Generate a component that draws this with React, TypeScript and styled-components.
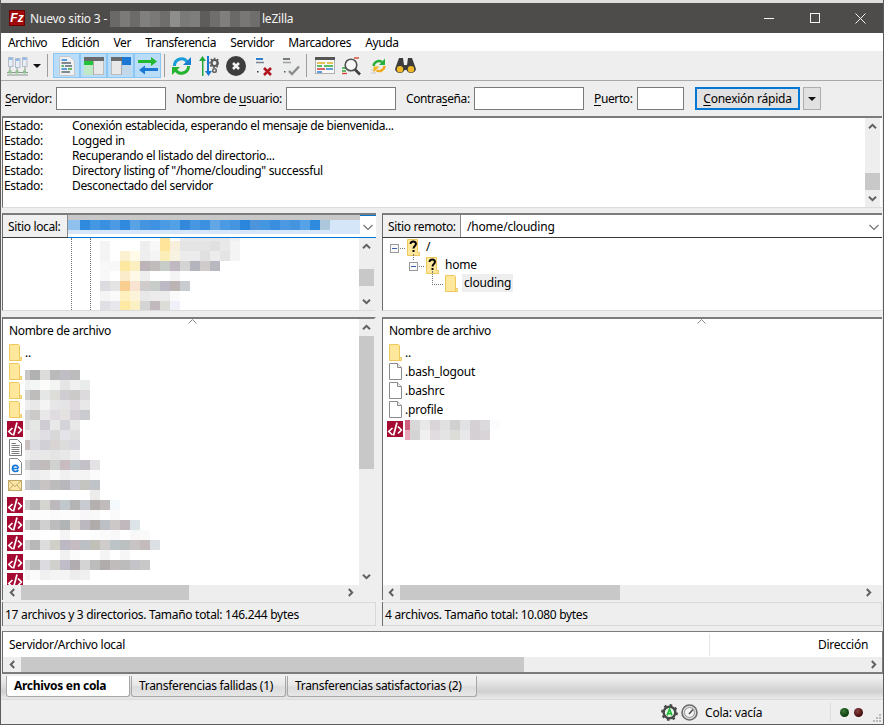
import React from "react";
import styled, {createGlobalStyle} from "styled-components";

const GlobalStyle = createGlobalStyle`
  html, body { margin: 0; padding: 0; background: #fff; }
  body { font-family: "Noto Sans", "Liberation Sans", sans-serif; font-size: 12px; color: #000; }
  * { box-sizing: border-box; }
  u { text-underline-offset: 2px; }
`;

const Window = styled.div`
  width: 884px;
  height: 725px;
  display: flex;
  flex-direction: column;
  overflow: hidden;
  background: #eeeeee;
  border-left: 1px solid #5c5c5c;
  border-right: 1px solid #5c5c5c;
  border-bottom: 1px solid #5c5c5c;
`;
const TopEdge = styled.div`
  height: 3px;
  margin: 0 -1px;
  background: #dfdfdf;
  flex: none;
`;
const TitleBar = styled.div`
  height: 30px;
  flex: none;
  margin: 0 -1px;
  background: #4d4c4a;
  color: #f4f4f4;
  display: flex;
  align-items: center;
  padding-left: 9px;
  padding-right: 1px;
`;
const AppLogo = styled.div`
  width: 16px;
  height: 16px;
  background: #a30a0a;
  border: 1px solid #6d0000;
  color: #fff;
  font: italic bold 12px/14px "Liberation Sans", sans-serif;
  text-align: center;
  margin-right: 5px;
`;
const TitleText = styled.span`
  font-size: 12px;
  white-space: pre;
  letter-spacing: -0.2px;
`;
const Spacer = styled.div`
  flex: 1;
`;
const WinButton = styled.div`
  width: 45.5px;
  height: 30px;
  display: flex;
  align-items: center;
  justify-content: center;
`;
const Tile = styled.i.attrs<{$c: string}>((p) => ({style: {background: `#${p.$c}`}}))<{$c: string}>`
  display: block;
  flex: none;
  width: 10px;
  height: 100%;
`;
const MosaicRow = styled.div<{$h: number}>`
  display: flex;
  height: ${(p) => p.$h}px;
  ${Tile}:first-child { width: 5px; }
`;
const Mosaic = ({rows, h = 10, className}: {rows: string[]; h?: number; className?: string}) => (
  <div className={className}>
    {rows.map((r, i) => (
      <MosaicRow key={i} $h={h}>
        {r.split(" ").map((c, j) => (
          <Tile key={j} $c={c} />
        ))}
      </MosaicRow>
    ))}
  </div>
);
const TitleBlur = styled(Mosaic)`
  width: 152px;
  margin-top: 1px;
  ${Tile}:first-child { width: 10px; }
`;

const MenuBar = styled.div`
  height: 18px;
  flex: none;
  background: #fff;
  display: flex;
  align-items: center;
  padding-left: 7px;
  gap: 14.2px;
`;
const MenuItem = styled.span`
  font-size: 12px;
  letter-spacing: -0.4px;
`;

const Toolbar = styled.div`
  height: 30px;
  flex: none;
  display: flex;
  align-items: center;
  padding: 0 0 0 5px;
  margin-right: 1px;
  border-bottom: 1px solid #a9a9a9;
`;
const ToolButton = styled.div<{$w?: number}>`
  width: ${(p) => p.$w ?? 27}px;
  height: 25px;
  display: flex;
  align-items: center;
  justify-content: center;
`;
const ToggleGroup = styled.div`
  display: flex;
  height: 25px;
`;
const ToggleButton = styled(ToolButton)`
  background: #b9dcf8;
  border: 1px solid #8cc6f2;
`;
const ToolSep = styled.div<{$after: number}>`
  width: 1px;
  height: 23px;
  background: #9c9c9c;
  margin: 0 ${(p) => p.$after}px 0 3px;
`;
const Caret = styled.div`
  width: 0;
  height: 0;
  border-left: 4px solid transparent;
  border-right: 4px solid transparent;
  border-top: 4px solid #111;
`;

const QuickBar = styled.div`
  height: 35px;
  flex: none;
  display: flex;
  align-items: center;
  padding: 0 0 0 4px;
`;
const QuickLabel = styled.label<{$w: number}>`
  width: ${(p) => p.$w}px;
  flex: none;
  font-size: 12px;
  letter-spacing: -0.38px;
  white-space: nowrap;
`;
const QuickInput = styled.div<{$w: number; $after: number}>`
  width: ${(p) => p.$w}px;
  height: 23px;
  background: #fff;
  border: 1px solid #7a7a7a;
  margin-right: ${(p) => p.$after}px;
`;
const ConnectButton = styled.div`
  width: 105px;
  height: 23px;
  border: 2px solid #0078d7;
  background: #e1e1e1;
  display: flex;
  align-items: center;
  justify-content: center;
  font-size: 12px;
  letter-spacing: -0.25px;
`;
const ConnectCaret = styled.div`
  width: 18px;
  height: 23px;
  margin-left: 3px;
  background: #e1e1e1;
  border: 1px solid #adadad;
  display: flex;
  align-items: center;
  justify-content: center;
`;

const LogPanel = styled.div`
  height: 92px;
  flex: none;
  margin: 0 1px;
  padding-right: 2px;
  background: #fff;
  border-top: 2px solid #7c7c7c;
  border-left: 1px solid #6d6d6d;
  border-bottom: 1px solid #dcdcdc;
  display: flex;
`;
const LogLines = styled.div`
  flex: 1;
  padding: 0 0 0 1px;
`;
const LogLine = styled.div`
  display: flex;
  height: 15px;
  line-height: 15px;
  font-size: 12px;
  letter-spacing: -0.35px;
  white-space: pre;
`;
const LogTag = styled.span`
  width: 68px;
  flex: none;
`;

const VBar = styled.div`
  width: 15px;
  flex: 1;
  background: #eeeeee;
  display: flex;
  flex-direction: column;
  align-items: center;
`;
const VColumn = styled.div`
  width: 15px;
  flex: none;
  display: flex;
  flex-direction: column;
`;
const ArrowCell = styled.div`
  width: 15px;
  height: 17px;
  flex: none;
  display: flex;
  align-items: center;
  justify-content: center;
`;
const VTrack = styled.div<{$before: number; $size: number}>`
  flex: 1;
  width: 15px;
  padding-top: ${(p) => p.$before}px;
  &::before {
    content: "";
    display: block;
    height: ${(p) => p.$size}px;
    background: #c8c8c8;
  }
`;
const HBar = styled.div<{$end?: number}>`
  height: 15px;
  flex: none;
  background: #eeeeee;
  display: flex;
  padding-right: ${(p) => p.$end ?? 0}px;
`;
const HTrack = styled.div<{$before: number; $size: number}>`
  flex: 1;
  display: flex;
  padding-left: ${(p) => p.$before}px;
  &::before {
    content: "";
    display: block;
    width: ${(p) => p.$size}px;
    background: #c8c8c8;
  }
`;
const HArrow = styled(ArrowCell)<{$w?: number}>`
  height: 15px;
  width: ${(p) => p.$w ?? 18}px;
`;
const Corner = styled.div`
  width: 15px;
  height: 15px;
  flex: none;
  background: #eeeeee;
`;

const Chevron = ({dir}: {dir: "up" | "down" | "left" | "right"}) => {
  const rot = {up: 0, right: 90, down: 180, left: 270}[dir];
  return (
    <svg width="11" height="11" viewBox="0 0 11 11" style={{transform: `rotate(${rot}deg)`}}>
      <path d="M2 7.2 L5.5 3.8 L9 7.2" fill="none" stroke="#606060" strokeWidth="2" />
    </svg>
  );
};

const VScroll = ({before, size, corner}: {before: number; size: number; corner?: boolean}) => (
  <VColumn>
    <VBar>
      <ArrowCell>
        <Chevron dir="up" />
      </ArrowCell>
      <VTrack $before={before} $size={size} />
      <ArrowCell>
        <Chevron dir="down" />
      </ArrowCell>
    </VBar>
    {corner && <Corner />}
  </VColumn>
);
const HScroll = ({start, size, end}: {start?: number; size: number; end?: number}) => (
  <HBar $end={end}>
    <HArrow $w={start}>
      <Chevron dir="left" />
    </HArrow>
    <HTrack $before={0} $size={size} />
    <HArrow>
      <Chevron dir="right" />
    </HArrow>
  </HBar>
);

const Panes = styled.div`
  flex: none;
  height: 414px;
  margin: 5px 0 0 1px;
  display: flex;
  gap: 6px;
`;
const Pane = styled.div<{$w: number}>`
  width: ${(p) => p.$w}px;
  display: flex;
  flex-direction: column;
`;
const PathBar = styled.div`
  height: 25px;
  flex: none;
  display: flex;
  border-top: 2px solid #7c7c7c;
  border-left: 1px solid #6d6d6d;
  border-bottom: 1px solid #3c3c3c;
`;
const PathLabel = styled.div<{$w: number}>`
  width: ${(p) => p.$w}px;
  flex: none;
  background: #f0f0f0;
  display: flex;
  align-items: center;
  padding-left: 5px;
  font-size: 12px;
  letter-spacing: -0.35px;
  border-right: 1px solid #8a8a8a;
`;
const PathCombo = styled.div<{$focus?: boolean}>`
  flex: 1;
  position: relative;
  background: #fff;
  display: flex;
  align-items: center;
  padding-left: 6px;
  font-size: 12px;
  letter-spacing: -0.2px;
  ${(p) => p.$focus && "box-shadow: inset 0 1px 0 #0078d7, 0 1px 0 #0078d7;"}
`;
const ComboCaret = styled.div`
  position: absolute;
  right: 2px;
  top: 5px;
  width: 12px;
  height: 12px;
`;
const PathBlur = styled.div`
  width: 292px;
  height: 19px;
  margin-left: -6px;
  align-self: flex-start;
  background: #d4e6f8;
  display: flex;
  flex-direction: column;
  position: relative;
`;
const PathBlurTop = styled.div`
  height: 5px;
  width: 292px;
  background: #c8c8c8;
`;
const PathBlurMain = styled(Mosaic)`
  ${Tile}:first-child { width: 12px; }
`;

const TreePanel = styled.div<{$gutter?: boolean}>`
  height: 73px;
  flex: none;
  display: flex;
  position: relative;
  background: #fff;
  border-left: 1px solid #6d6d6d;
  border-bottom: 1px solid #dcdcdc;
  border-right: ${(p) => (p.$gutter ? "2px solid #eeeeee" : "none")};
`;
const TreeBody = styled.div`
  flex: 1;
  position: relative;
  overflow: hidden;
`;
const DottedLine = styled.div<{$x: number}>`
  position: absolute;
  top: 0;
  bottom: 0;
  left: ${(p) => p.$x}px;
  border-left: 1px dotted #777;
`;
const TreeBlur = styled(Mosaic)`
  position: absolute;
  left: 97px;
  top: 3px;
  ${Tile}:first-child { width: 10px; }
`;
const TreeBlurTop = styled(TreeBlur)`
  top: 0;
`;
const TreeRow = styled.div<{$depth: number}>`
  height: 18px;
  display: flex;
  align-items: center;
  padding-left: ${(p) => 7 + p.$depth * 19}px;
`;
const ExpandBox = styled.div`
  width: 9px;
  height: 9px;
  background: #f8f8f8;
  border: 1px solid #9a9a9a;
  display: flex;
  align-items: center;
  justify-content: center;
  margin-top: 2px;
  &::before {
    content: "";
    width: 5px;
    height: 1px;
    background: #3a5ea8;
  }
`;
const HDots = styled.div<{$w: number}>`
  width: ${(p) => p.$w}px;
  border-top: 1px dotted #777;
  margin: 2px 2px 0 1px;
`;
const TreeLabel = styled.span<{$selected?: boolean}>`
  margin-left: 4px;
  padding: 0 2px;
  height: 18px;
  line-height: 18px;
  font-size: 12px;
  letter-spacing: -0.2px;
  background: ${(p) => (p.$selected ? "#eeeeee" : "transparent")};
`;
const LElbow = styled.div`
  width: 11px;
  height: 14px;
  border-left: 1px dotted #777;
  border-bottom: 1px dotted #777;
  margin: -10px 2px 0 4px;
`;
const VDots = styled.div<{$x: number; $y: number; $h: number}>`
  position: absolute;
  left: ${(p) => p.$x}px;
  top: ${(p) => p.$y}px;
  height: ${(p) => p.$h}px;
  border-left: 1px dotted #777;
`;

const ListPanel = styled.div<{$gutter?: boolean}>`
  height: 283px;
  flex: none;
  margin-top: 6px;
  display: flex;
  position: relative;
  background: #fff;
  border-top: 2px solid #7c7c7c;
  border-left: 1px solid #6d6d6d;
  border-right: ${(p) => (p.$gutter ? "2px solid #eeeeee" : "none")};
`;
const ListMain = styled.div`
  flex: 1;
  min-width: 0;
  display: flex;
  flex-direction: column;
`;
const ListBody = styled.div`
  flex: 1;
  overflow: hidden;
  position: relative;
`;
const ListHeader = styled.div`
  height: 24px;
  padding: 4px 0 0 6px;
  font-size: 12px;
  line-height: 16px;
  letter-spacing: -0.35px;
`;
const SortMark = styled.div<{$x: number}>`
  position: absolute;
  left: ${(p) => p.$x}px;
  top: 0;
  line-height: 0;
`;
const FileRow = styled.div`
  height: 19px;
  display: flex;
  align-items: center;
  font-size: 12px;
  letter-spacing: -0.2px;
`;
const IconSlot = styled.div`
  width: 16px;
  height: 17px;
  margin: 0 2px 0 4px;
  display: flex;
  align-items: center;
  justify-content: center;
  flex: none;
`;
const LocalBlur = styled(Mosaic)`
  position: absolute;
  left: 22px;
  top: 51px;
`;
const RemoteBlur = styled(LocalBlur)`
  top: 101px;
`;
const StatusCell = styled.div`
  height: 24px;
  flex: none;
  margin-top: 2px;
  display: flex;
  align-items: center;
  padding-left: 2px;
  border-left: 1px solid #6d6d6d;
  box-shadow: inset 0 1px 0 #d8d8d8, inset -1px 0 0 #d8d8d8, inset 0 -1px 0 #d8d8d8;
  font-size: 12px;
  letter-spacing: -0.3px;
`;

const QueuePanel = styled.div`
  height: 43px;
  flex: none;
  margin: 4px 0 0 1px;
  background: #fff;
  border-top: 1px solid #7c7c7c;
  border-left: 1px solid #6d6d6d;
  border-bottom: 2px solid #7c7c7c;
  border-right: 1px solid #7c7c7c;
  display: flex;
  flex-direction: column;
`;
const QueueHead = styled.div`
  height: 25px;
  flex: none;
  display: flex;
  align-items: center;
  font-size: 12px;
  letter-spacing: -0.3px;
`;
const QueueCol = styled.div<{$w?: number; $end?: boolean}>`
  ${(p) => (p.$w ? `width: ${p.$w}px; flex: none;` : "flex: 1;")}
  height: 22px;
  line-height: 22px;
  padding: ${(p) => (p.$end ? "0 14px 0 0" : "0 0 0 6px")};
  text-align: ${(p) => (p.$end ? "right" : "left")};
  border-left: ${(p) => (p.$end ? "1px solid #e4e4e4" : "none")};
`;

const TabStrip = styled.div`
  height: 26px;
  flex: none;
  display: flex;
  align-items: flex-start;
  padding: 2px 0 0 5px;
  background: linear-gradient(#eeeeee 0%, #eeeeee 15%, #d0d0d0 70%, #e6e6e6 95%);
  border-bottom: 1px solid #dcdcdc;
`;
const Tab = styled.div<{$active?: boolean; $w: number}>`
  width: ${(p) => p.$w}px;
  height: 21px;
  margin-right: 1px;
  padding-left: 7px;
  line-height: 19px;
  font-size: 12px;
  letter-spacing: -0.3px;
  font-weight: ${(p) => (p.$active ? 700 : 400)};
  background: ${(p) => (p.$active ? "#fff" : "linear-gradient(#f2f2f2, #e8e8e8 45%, #dcdcdc 55%, #e6e6e6)")};
  border: 1px solid #a8a8a8;
  border-top: none;
  border-radius: 0 0 3px 3px;
`;
const StatusBar = styled.div`
  flex: 1;
  display: flex;
  align-items: center;
  padding-left: 660px;
  position: relative;
  font-size: 12px;
  letter-spacing: -0.2px;
`;
const QueueText = styled.span`
  margin-left: 7px;
  width: 125px;
`;
const BarSep = styled.div`
  width: 1px;
  height: 20px;
  background: #dcdcdc;
`;
const Led = styled.div<{$c: string}>`
  width: 9px;
  height: 9px;
  border-radius: 50%;
  margin-left: ${(p) => (p.$c === "g" ? 9 : 5)}px;
  background: ${(p) =>
    p.$c === "g"
      ? "radial-gradient(circle at 40% 35%, #3c7a3c, #0a3a0a 70%)"
      : "radial-gradient(circle at 40% 35%, #8c4444, #420808 70%)"};
`;
const Grip = styled.svg`
  position: absolute;
  right: 1px;
  bottom: 1px;
`;

const Folder = () => (
  <svg width="13" height="17" viewBox="0 0 13 17">
    <path d="M.5.5 H9.5 L10.5 1.5 V13.5 H12.5 V16.5 H.5 Z" fill="#ffe79c" stroke="#eec85c" />
    <path d="M10.5 13.5 V16.5" stroke="#eec85c" />
  </svg>
);
const UnknownFolder = () => (
  <svg width="13" height="17" viewBox="0 0 13 17">
    <path d="M.5.5 H10.5 V13.5 H12.5 V16.5 H.5 Z" fill="#ffe79c" stroke="#eec85c" />
    <path d="M3.5 5 C3.5 1.6 9 1.6 9 5 C9 7 6.5 7 6.5 9.5" fill="none" stroke="#000" strokeWidth="1.9" />
    <rect x="5.5" y="11" width="2" height="2" />
  </svg>
);
const PlainFile = () => (
  <svg width="13" height="17" viewBox="0 0 13 17">
    <path d="M.5.5 H8.5 L12.5 4.5 V16.5 H.5 Z" fill="#fff" stroke="#8b8b8b" />
    <path d="M8.5.5 V4.5 H12.5" fill="#eee" stroke="#8b8b8b" />
  </svg>
);
const TextFile = () => (
  <svg width="13" height="17" viewBox="0 0 13 17">
    <path d="M.5.5 H8.5 L12.5 4.5 V16.5 H.5 Z" fill="#fff" stroke="#7b7b7b" />
    <path d="M2.5 4.5 H7 M2.5 6.5 H10.5 M2.5 8.5 H10.5 M2.5 10.5 H10.5 M2.5 12.5 H10.5 M2.5 14.5 H10.5" stroke="#808080" />
  </svg>
);
const HtmlFile = () => (
  <svg width="13" height="17" viewBox="0 0 13 17">
    <path d="M.5.5 H8.5 L12.5 4.5 V16.5 H.5 Z" fill="#fff" stroke="#8b8b8b" />
    <path d="M9.3 10.5 H3.5 C3.5 6.5 9.3 6.5 9.3 10.2 M9.2 12 C8 14.3 3.5 14 3.5 10.5" fill="none" stroke="#1477d8" strokeWidth="1.7" />
  </svg>
);
const MailFile = () => (
  <svg width="14" height="11" viewBox="0 0 14 11">
    <rect x=".5" y=".5" width="13" height="10" fill="#fbe6a6" stroke="#c0a868" />
    <path d="M.5.5 L7 6.5 L13.5.5 M.5 10.5 L5 5 M13.5 10.5 L9 5" fill="none" stroke="#c0a868" />
  </svg>
);
const CodeFile = () => (
  <svg width="16" height="16" viewBox="0 0 16 16" style={{flex: "none"}}>
    <rect width="16" height="16" fill="#a50a33" />
    <path d="M5.5 7 L1.8 10.5 L5.5 14 M11 5.5 L14.4 9 L11 12.5 M10 1.5 L6.5 14.5" fill="none" stroke="#fff" strokeWidth="1.7" />
  </svg>
);

const SiteManagerIcon = () => (
  <svg width="21" height="20" viewBox="0 0 21 20">
    {[1, 8, 15].map((x, i) => (
      <g key={x} transform={`translate(${x} ${i === 1 ? 2 : 1})`}>
        <rect x=".5" y=".5" width="4.5" height="9" fill="#e8eef6" stroke="#b4bccc" />
        <rect x="1" y="1" width="3.5" height="2" fill="#8fbcec" />
      </g>
    ))}
    <path d="M3 11 V15 M10 12 V15 M18 11 V15 M0 16.5 H21 M0 19 H21" stroke="#8a968a" />
    <rect x="1.5" y="14.5" width="3" height="3" fill="#8cc48c" />
    <rect x="8.5" y="14.5" width="3" height="3" fill="#8cc48c" />
    <rect x="16" y="14.5" width="3" height="3" fill="#8cc48c" />
  </svg>
);
const LogIcon = () => (
  <svg width="16" height="20" viewBox="0 0 16 20">
    <path d="M.5.5 H11 L15.5 5 V19.5 H.5 Z" fill="#eef0f2" stroke="#c4c8cc" />
    <path d="M2.5 4 H8 M2.5 13 H8" stroke="#2f7fd0" strokeWidth="1.5" />
    <path d="M2.5 7 H12 M6 10 H13 M2.5 16 H11" stroke="#5c6670" strokeWidth="1.5" />
    <path d="M2.5 10 H5 M9 13 H13" stroke="#3aa048" strokeWidth="1.5" />
  </svg>
);
const PaneIcon = ({side}: {side: "left" | "right"}) => (
  <svg width="20" height="18" viewBox="0 0 20 18">
    <rect x=".5" y=".5" width="19" height="17" fill="#e8e8e8" stroke="#bcbcbc" />
    <rect x="0" y="0" width="20" height="4" fill="#6a6a6a" />
    {side === "left" ? (
      <>
        <rect x="0" y="4" width="9" height="4" fill="#22c33a" />
        <rect x="0" y="8" width="9" height="10" fill="#bfe8c4" />
        <rect x="9" y="4" width="1" height="14" fill="#aaa" />
      </>
    ) : (
      <>
        <rect x="11" y="0" width="9" height="8" fill="#1a78d4" />
        <rect x="11" y="8" width="9" height="10" fill="#c2d8ea" />
        <rect x="10" y="4" width="1" height="14" fill="#aaa" />
      </>
    )}
  </svg>
);
const TransferIcon = () => (
  <svg width="20" height="19" viewBox="0 0 20 19">
    <path d="M0 4 H13 V1 L19 5.5 L13 10 V7 H0 Z" fill="#22b830" />
    <path d="M20 12 H7 V9.5 L1 14 L7 18.5 V15 H20 Z" fill="#1a78d4" />
  </svg>
);
const RefreshIcon = () => (
  <svg width="21" height="20" viewBox="0 0 21 20">
    <path d="M3.5 10 A7 7 0 0 1 16 5.5" fill="none" stroke="#1a9cd8" strokeWidth="3" />
    <path d="M20 1 V9 H12 Z" fill="#1a7fd0" />
    <path d="M17.5 10 A7 7 0 0 1 5 14.5" fill="none" stroke="#24b430" strokeWidth="3" />
    <path d="M1 19 V11 H9 Z" fill="#24b430" />
  </svg>
);
const FilterIcon = () => (
  <svg width="20" height="20" viewBox="0 0 20 20">
    <path d="M3 20 V5 H0 L3.5 0 L7 5 H4.5 V20 Z" fill="#22a838" />
    <path d="M8 0 V15 H6 L9.5 20 L13 15 H10 V0 Z" fill="#1a78d4" />
    <circle cx="15.5" cy="7" r="3" fill="none" stroke="#5a5a5a" strokeWidth="2.2" />
    <circle cx="15.5" cy="7" r="4.6" fill="none" stroke="#5a5a5a" strokeWidth="1.4" strokeDasharray="1.7 1.7" />
    <circle cx="15.5" cy="14.5" r="1.8" fill="none" stroke="#6a6a6a" strokeWidth="1.6" />
  </svg>
);
const CancelIcon = () => (
  <svg width="20" height="20" viewBox="0 0 20 20">
    <circle cx="10" cy="10" r="10" fill="#3d3d3d" />
    <path d="M7 7 L13 13 M13 7 L7 13" stroke="#f4f4f4" strokeWidth="2.6" />
  </svg>
);
const DisconnectIcon = () => (
  <svg width="20" height="20" viewBox="0 0 20 20">
    <path d="M1 0 H10 L13 3 V19 H1 Z" fill="#eef0f2" />
    <path d="M3 3 H10" stroke="#2f7fd0" strokeWidth="2" />
    <path d="M3 6.5 H11" stroke="#7a8490" strokeWidth="1.5" />
    <rect x="4" y="15" width="1.5" height="1.5" fill="#333" />
    <path d="M11 12 L18 19 M18 12 L11 19" stroke="#b2141e" strokeWidth="2.6" />
  </svg>
);
const ReconnectIcon = () => (
  <svg width="20" height="20" viewBox="0 0 20 20">
    <path d="M1 0 H10 L13 3 V19 H1 Z" fill="#eceeee" />
    <path d="M3 3 H10" stroke="#7a7a7a" strokeWidth="2" />
    <path d="M3 6.5 H11" stroke="#a0a0a0" strokeWidth="1.5" />
    <rect x="4" y="15" width="1.5" height="1.5" fill="#555" />
    <path d="M9 15 L12 18 L19 10.5" fill="none" stroke="#8c8c8c" strokeWidth="2.4" />
  </svg>
);
const QueueIcon = () => (
  <svg width="20" height="17" viewBox="0 0 20 17">
    <rect x=".5" y=".5" width="19" height="16" fill="#f8f8f8" stroke="#b0b0b0" />
    <rect width="20" height="3" fill="#555" />
    <path d="M2 6 H10 M12 6 H18" stroke="#e0b020" strokeWidth="1.6" />
    <path d="M2 9 H7 M9 9 H18" stroke="#28a838" strokeWidth="1.6" />
    <path d="M2 12 H10" stroke="#d04040" strokeWidth="1.6" />
    <path d="M2 15 H7 M11 12 H18" stroke="#2f7fd0" strokeWidth="1.6" />
  </svg>
);
const SearchIcon = () => (
  <svg width="21" height="20" viewBox="0 0 21 20">
    <rect x="11" y="0" width="8" height="6" fill="#f0f0f0" />
    <path d="M13 2 H18" stroke="#d84030" strokeWidth="1.4" />
    <rect x="0" y="9" width="7" height="10" fill="#f0f0f0" />
    <path d="M1 12 H6 M1 15 H5" stroke="#28a838" strokeWidth="1.4" />
    <path d="M1 17.5 H6" stroke="#d84030" strokeWidth="1.4" />
    <circle cx="10" cy="9" r="5.8" fill="#fafafa" fillOpacity=".7" stroke="#505050" strokeWidth="1.6" />
    <path d="M14 13.5 L19 18.5" stroke="#404040" strokeWidth="2.6" />
  </svg>
);
const SyncIcon = () => (
  <svg width="20" height="20" viewBox="0 0 20 20">
    <rect x="11" y="0" width="8" height="9" fill="#f0f0f0" />
    <rect x="0" y="11" width="9" height="9" fill="#eeeeee" />
    <path d="M2 14 H7 M2 17 H7" stroke="#c8c8c8" />
    <path d="M4.5 10 A5.5 5.5 0 0 1 13 6" fill="none" stroke="#28b038" strokeWidth="2.4" />
    <path d="M16 2.5 V9 H10 Z" fill="#28b038" />
    <path d="M15.5 10 A5.5 5.5 0 0 1 7.5 14.5" fill="none" stroke="#f0a818" strokeWidth="2.4" />
    <path d="M4.5 16.5 V10.5 H10.5 Z" fill="#f0b820" />
  </svg>
);
const BinocularsIcon = () => (
  <svg width="21" height="18" viewBox="0 0 21 18">
    <path d="M4 1 H8 L9 8 H12 L13 1 H17 L21 12 A5 5 0 0 1 11.5 13 H9.5 A5 5 0 0 1 0 12 Z" fill="#3c3c3c" />
    <circle cx="5" cy="12.3" r="3.2" fill="#f0b828" />
    <circle cx="16" cy="12.3" r="3.2" fill="#f0b828" />
  </svg>
);
const GearStatus = () => (
  <svg width="17" height="17" viewBox="0 0 17 17">
    <circle cx="8.5" cy="8.5" r="5.8" fill="#e8f8e8" stroke="#484848" strokeWidth="2.4" />
    <circle cx="8.5" cy="8.5" r="7.4" fill="none" stroke="#484848" strokeWidth="2" strokeDasharray="2.6 3.2" />
    <path d="M6 11.5 L8.5 5 L11 11.5 M7 9.6 H10" fill="none" stroke="#22b838" strokeWidth="1.6" />
  </svg>
);
const GaugeStatus = () => (
  <svg width="17" height="17" viewBox="0 0 17 17" style={{marginLeft: 3}}>
    <circle cx="8.5" cy="8.5" r="7.5" fill="#e0e0e0" stroke="#6c6c6c" strokeWidth="1.6" />
    <circle cx="8.5" cy="8.5" r="5" fill="#f4f4f4" stroke="#909090" />
    <path d="M8 10 L12 5.5" stroke="#505050" strokeWidth="1.6" />
  </svg>
);

const logLines = [
  "Conexión establecida, esperando el mensaje de bienvenida...",
  "Logged in",
  "Recuperando el listado del directorio...",
  'Directory listing of "/home/clouding" successful',
  "Desconectado del servidor",
];

const titleBlur = ["6a6967 7b7a78 6c6b69 80807e 7a7977 6f6e6c 8e8e8c 7a7a78 7e7e7c 5e5d5b 6f6e6c 807f7d 6a6967 787775 6f6e6c"];
const pathBlur = [
  "8fc0ee 2f8ade 4497e2 3a90e0 4c9ae4 3089dc 5aa2e6 4494e0 3f92e2 4a9ae4 52a0e6 3388dc 4696e2 3c90e0 62a6e6 4a9ae4 4494e0 2a86dc 4c94dc 4496e0 3a8ee0 4c98e2 4494e0 56a2e6 2e8adc acc6dc",
];
const treeBlurTop = ["fff fff fff fff fff fff ffe49a fff e8e8e8 e8e8e8 e8e8e8 e8e8e8 e8e8e8 f0f0f0"];
const treeBlur = [
  "f4f4f4 fff fff fff eee f8f8f8 ffe49a f8eedc e4e4e4 e4e4e4 e4e4e4 e0e0e0 e8e8e8 f4f4f4",
  "f4f4f4 fff fbf0d0 fffbe8 eee f4f4f4 fbeeb8 f8f2e0 ececec ececec e0e0e0 ececec e4e4e4 f4f4f4",
  "f8f8f8 f8f8f8 fde8a0 fbeec0 bcb4b8 c0bcbc c8ccc8 c0b8c0 d4d4d4 b4b4bc d0cccc b8b8c0",
  "f8f8f8 fff fbeccc fdf8e8 eee fff fff f4f4f4",
  "dcdce0 e4e4e4 f8cf90 f8e4d0 d0cccc c8ccc8 bcb8c4 bcb4b4 c8ccd0",
  "f4f4f4 fafafa fff0c0 fcf4d8 e8e8e8 ececec ececec fafafa",
  "e0e0e4 e8e8ec fde8a4 fbf0c4 d4d4d4 c0b8bc dcdcd8 f0f0f8",
];
const localBlur = [
  "c8c6c6 b2b1b1 dcdcda bbbaba c0bdc4 bdbcbc",
  "f0f1f1 f4f6f6 fcfcfb f3f4f4 e5e5e6 f0f0f1 eaecec",
  "d0d0d0 bfbcbc e5e7e7 dcdcd8 d0cdd2 ccc9c9 dddadd",
  "efefef e8e8e8 f4f4f4 e6e6e6 e4e4e6 dedadf e8e8e8",
  "d4d4d4 ccc9c9 e8e8e8 dfdbdf e3e2e0 d4d0d6 c9cbcf",
  "ddd e5e7e4 cfccd3 e8e8e8 d3d3d8 e8e8e8",
  "eee e4e4e4 e0dee2 d8d8d8 e4e4e8 dfdfdf",
  "c8c0c0 dcdce0 d0d0d6 d8d4d4 dcdcdc d8d8de",
  "eee e8e8e8 e8e8e8 e4e4e4 e8e8e8 efefef",
  "d0d0d0 c0bdc0 c0bcbc d0d2d0 c8bcc0 c4c8cc c4c0c8 e4e2e4",
  "f6f6f6 ececec f0f0f0 f8f8f8 f0f0f0 f4f4f4 f4f4f4 fbfbfb",
  "c8c8cc bcc0c4 c8c4c4 bcbcbc b8b8bc c8c8d0 c4c4c0 c0c4c8",
  "fff fff fff fff fff fff fff ececec",
  "ccc b8b8b8 d4d4d0 bcb8bc c0c8cc b4b4b4 c8ccd0 b4b0b0 c0bcbc f4fafc",
  "fff fcfcfc fcfcfc fafafa fcfcfc fcfcfc f8f6f8 f8f8f8 fff fafafa",
  "ccc b8b8b8 d0d0d0 bcbcbc b0b4b4 d4d0cc bcb8c0 b0acac bcc0c4 ccc8c8 c0b8bc dce4e8",
  "fff fcfcfc fff fff f4f4f4 fff fff fcfcfc fafafa f8f8f8 fff f8f8f8 fafafa",
  "ccc b8b8b8 dcdcdc d0d0c8 bcb8c4 c4bcc0 bcc0c4 c0c0b8 d0cccc bcc4c8 bcc0c0 c8c4c4 c4bcbc dce0e4",
  "fff fff fff fff f0f0f0 fafafa fff fff f4f4f4 fff f6f6f6",
  "ccc b8b8b8 dcdce0 d0d0cc c0bcc8 b0acb0 d4d4d4 bcbcbc b0acac c0bcbc bcbcbc c4c4c8 c8c8c8",
  "f4f4f4 fafafa f0f0f0 f4f4f4 f4f4f4 ececec f0f0f0",
];
const remoteBlur = [
  "d0607f d8d8d8 e8e8e8 d8d4d8 e0e0e0 d0d0d0 e0e2e4 d4d0d4 dcdadc fcfcfe",
  "e8a8bc d4d4d4 f0f0f0 e0dce0 e4e4e4 dcdcd8 e8e8ea d4d0d4 d8d4d8",
];

const localIcons = [
  <Folder />, <Folder />, <Folder />, <CodeFile />, <TextFile />, <HtmlFile />, <MailFile />,
  <CodeFile />, <CodeFile />, <CodeFile />, <CodeFile />, <CodeFile />,
];

const Sort = ({x}: {x: number}) => (
  <SortMark $x={x}>
    <svg width="9" height="5" viewBox="0 0 9 5">
      <path d="M.5 4.5 L4.5 .5 L8.5 4.5" fill="none" stroke="#8a8a8a" />
    </svg>
  </SortMark>
);
const ComboChevron = () => (
  <ComboCaret>
    <svg width="12" height="12" viewBox="0 0 12 12">
      <path d="M1.5 4 L6 8.5 L10.5 4" fill="none" stroke="#707070" strokeWidth="1.1" />
    </svg>
  </ComboCaret>
);

export default function App() {
  return (
    <>
      <GlobalStyle />
      <Window>
        <TopEdge />
        <TitleBar>
          <AppLogo>Fz</AppLogo>
          <TitleText>Nuevo sitio 3 - </TitleText>
          <TitleBlur rows={titleBlur} h={16} />
          <TitleText>leZilla</TitleText>
          <Spacer />
          <WinButton>
            <svg width="10" height="10" viewBox="0 0 10 10">
              <path d="M0 5.5 H10" stroke="#f4f4f4" />
            </svg>
          </WinButton>
          <WinButton>
            <svg width="10" height="10" viewBox="0 0 10 10">
              <rect x=".5" y=".5" width="9" height="9" fill="none" stroke="#f4f4f4" />
            </svg>
          </WinButton>
          <WinButton>
            <svg width="11" height="11" viewBox="0 0 11 11">
              <path d="M.5 .5 L10.5 10.5 M10.5 .5 L.5 10.5" stroke="#f4f4f4" />
            </svg>
          </WinButton>
        </TitleBar>
        <MenuBar>
          {["Archivo", "Edición", "Ver", "Transferencia", "Servidor", "Marcadores", "Ayuda"].map((m) => (
            <MenuItem key={m}>{m}</MenuItem>
          ))}
        </MenuBar>
        <Toolbar>
          <ToolButton $w={23}>
            <SiteManagerIcon />
          </ToolButton>
          <ToolButton $w={15}>
            <Caret />
          </ToolButton>
          <ToolSep $after={5} />
          <ToggleGroup>
            <ToggleButton><LogIcon /></ToggleButton>
            <ToggleButton><PaneIcon side="left" /></ToggleButton>
            <ToggleButton><PaneIcon side="right" /></ToggleButton>
            <ToggleButton><TransferIcon /></ToggleButton>
          </ToggleGroup>
          <ToolSep $after={3} />
          <ToolButton><RefreshIcon /></ToolButton>
          <ToolButton><FilterIcon /></ToolButton>
          <ToolButton><CancelIcon /></ToolButton>
          <ToolButton><DisconnectIcon /></ToolButton>
          <ToolButton><ReconnectIcon /></ToolButton>
          <ToolSep $after={4} />
          <ToolButton><QueueIcon /></ToolButton>
          <ToolButton><SearchIcon /></ToolButton>
          <ToolButton><SyncIcon /></ToolButton>
          <ToolButton><BinocularsIcon /></ToolButton>
        </Toolbar>
        <QuickBar>
          <QuickLabel $w={51}><u>S</u>ervidor:</QuickLabel>
          <QuickInput $w={110} $after={10} />
          <QuickLabel $w={110}>Nombre de <u>u</u>suario:</QuickLabel>
          <QuickInput $w={110} $after={10} />
          <QuickLabel $w={68}>Contra<u>s</u>eña:</QuickLabel>
          <QuickInput $w={110} $after={10} />
          <QuickLabel $w={43}><u>P</u>uerto:</QuickLabel>
          <QuickInput $w={47} $after={11} />
          <ConnectButton><span><u>C</u>onexión rápida</span></ConnectButton>
          <ConnectCaret><Caret /></ConnectCaret>
        </QuickBar>
        <LogPanel>
          <LogLines>
            {logLines.map((l) => (
              <LogLine key={l}>
                <LogTag>Estado:</LogTag>
                {l}
              </LogLine>
            ))}
          </LogLines>
          <VScroll before={38} size={17} />
        </LogPanel>
        <Panes>
          <Pane $w={374}>
            <PathBar>
              <PathLabel $w={65}>Sitio local:</PathLabel>
              <PathCombo $focus>
                <PathBlur>
                  <PathBlurTop />
                  <PathBlurMain rows={pathBlur} />
                </PathBlur>
                <ComboChevron />
              </PathCombo>
            </PathBar>
            <TreePanel $gutter>
              <TreeBody>
                <DottedLine $x={68} />
                <DottedLine $x={87} />
                <TreeBlurTop rows={treeBlurTop} h={3} />
                <TreeBlur rows={treeBlur} />
              </TreeBody>
              <VScroll before={14} size={17} />
            </TreePanel>
            <ListPanel $gutter>
              <Sort x={185} />
              <ListMain>
                <ListBody>
                  <ListHeader>Nombre de archivo</ListHeader>
                  <FileRow>
                    <IconSlot><Folder /></IconSlot>
                    ..
                  </FileRow>
                  {localIcons.map((icon, i) => (
                    <FileRow key={i}>
                      <IconSlot>{icon}</IconSlot>
                    </FileRow>
                  ))}
                  <LocalBlur rows={localBlur} />
                </ListBody>
                <HScroll size={168} />
              </ListMain>
              <VScroll before={0} size={133} corner />
            </ListPanel>
            <StatusCell>17 archivos y 3 directorios. Tamaño total: 146.244 bytes</StatusCell>
          </Pane>
          <Pane $w={500}>
            <PathBar>
              <PathLabel $w={78}>Sitio remoto:</PathLabel>
              <PathCombo>
                /home/clouding
                <ComboChevron />
              </PathCombo>
            </PathBar>
            <TreePanel>
              <TreeBody>
                <TreeRow $depth={0}>
                  <ExpandBox />
                  <HDots $w={5} />
                  <UnknownFolder />
                  <TreeLabel>/</TreeLabel>
                </TreeRow>
                <TreeRow $depth={1}>
                  <ExpandBox />
                  <HDots $w={5} />
                  <UnknownFolder />
                  <TreeLabel>home</TreeLabel>
                </TreeRow>
                <TreeRow $depth={2}>
                  <LElbow />
                  <Folder />
                  <TreeLabel $selected>clouding</TreeLabel>
                </TreeRow>
                <VDots $x={30} $y={16} $h={6} />
              </TreeBody>
            </TreePanel>
            <ListPanel>
              <Sort x={314} />
              <ListMain>
                <ListBody>
                  <ListHeader>Nombre de archivo</ListHeader>
                  <FileRow>
                    <IconSlot><Folder /></IconSlot>
                    ..
                  </FileRow>
                  <FileRow>
                    <IconSlot><PlainFile /></IconSlot>
                    .bash_logout
                  </FileRow>
                  <FileRow>
                    <IconSlot><PlainFile /></IconSlot>
                    .bashrc
                  </FileRow>
                  <FileRow>
                    <IconSlot><PlainFile /></IconSlot>
                    .profile
                  </FileRow>
                  <FileRow>
                    <IconSlot><CodeFile /></IconSlot>
                  </FileRow>
                  <RemoteBlur rows={remoteBlur} />
                </ListBody>
                <HScroll start={17} size={220} end={5} />
              </ListMain>
            </ListPanel>
            <StatusCell>4 archivos. Tamaño total: 10.080 bytes</StatusCell>
          </Pane>
        </Panes>
        <QueuePanel>
          <QueueHead>
            <QueueCol>Servidor/Archivo local</QueueCol>
            <QueueCol $w={173} $end>Dirección</QueueCol>
          </QueueHead>
          <HScroll size={503} />
        </QueuePanel>
        <TabStrip>
          <Tab $active $w={124}>Archivos en cola</Tab>
          <Tab $w={155}>Transferencias fallidas (1)</Tab>
          <Tab $w={190}>Transferencias satisfactorias (2)</Tab>
        </TabStrip>
        <StatusBar>
          <GearStatus />
          <GaugeStatus />
          <QueueText>Cola: vacía</QueueText>
          <BarSep />
          <Led $c="g" />
          <Led $c="r" />
          <Grip width="10" height="10" viewBox="0 0 10 10">
            <path d="M7 1 h2 v2 h-2 z M4 4 h2 v2 h-2 z M7 4 h2 v2 h-2 z M1 7 h2 v2 h-2 z M4 7 h2 v2 h-2 z M7 7 h2 v2 h-2 z" fill="#b8b8b8" />
          </Grip>
        </StatusBar>
      </Window>
    </>
  );
}
